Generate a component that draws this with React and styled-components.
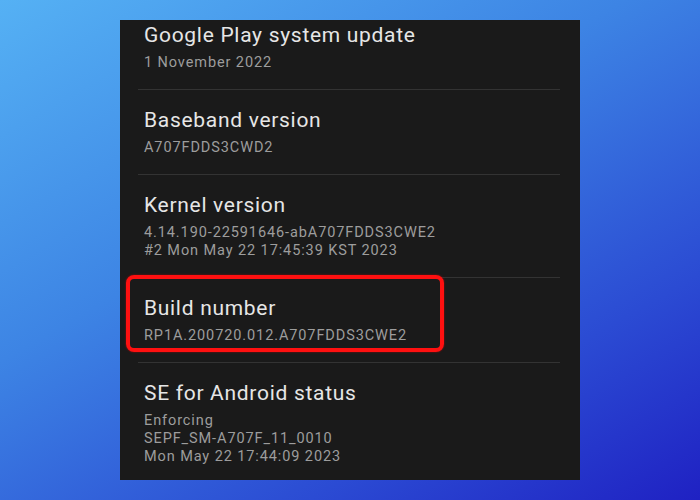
import React from 'react';
import styled, { createGlobalStyle } from 'styled-components';

const GlobalStyle = createGlobalStyle`
  html, body {
    margin: 0;
    padding: 0;
  }
  body {
    font-family: Roboto, 'Noto Sans', sans-serif;
  }
`;

const Backdrop = styled.div`
  width: 700px;
  height: 500px;
  display: flex;
  justify-content: center;
  align-items: center;
  background: linear-gradient(150deg, #55b1f4 0%, #3d84e4 40%, #2b4bd3 75%, #1f21c3 100%);
`;

const Screen = styled.div`
  width: 460px;
  height: 460px;
  background-color: #1a1a1a;
  overflow: hidden;
`;

const List = styled.div`
  margin-top: -15px;
  display: flex;
  flex-direction: column;
`;

const Item = styled.div`
  position: relative;
  margin: 0 20px 0 18px;
  padding: 17px 6px;
  border-bottom: ${(p) => (p.last ? 'none' : '1px solid #333333')};
`;

const Title = styled.div`
  font-size: 21px;
  line-height: 26px;
  letter-spacing: 0.7px;
  color: #e6e6e6;
  white-space: nowrap;
`;

const Sub = styled.div`
  margin-top: 6px;
  font-size: 14.5px;
  line-height: 18px;
  letter-spacing: 0.9px;
  color: #9d9d9d;
  white-space: nowrap;
`;

const Highlight = styled.div`
  position: absolute;
  left: -12px;
  top: -3px;
  width: 318px;
  height: 77px;
  box-sizing: border-box;
  border: 4px solid #ff1010;
  border-radius: 8px;
  box-shadow: 0 0 2px rgba(255, 0, 0, 0.6);
`;

const rows = [
  { title: 'Google Play system update', lines: ['1 November 2022'] },
  { title: 'Baseband version', lines: ['A707FDDS3CWD2'] },
  {
    title: 'Kernel version',
    lines: ['4.14.190-22591646-abA707FDDS3CWE2', '#2 Mon May 22 17:45:39 KST 2023'],
  },
  { title: 'Build number', lines: ['RP1A.200720.012.A707FDDS3CWE2'], marked: true },
  {
    title: 'SE for Android status',
    lines: ['Enforcing', 'SEPF_SM-A707F_11_0010', 'Mon May 22 17:44:09 2023'],
  },
];

const App = () => {
  return (
    <Backdrop>
      <GlobalStyle />
      <Screen>
        <List>
          {rows.map((row, i) => (
            <Item key={row.title} last={i === rows.length - 1}>
              <Title>{row.title}</Title>
              <Sub>
                {row.lines.map((line) => (
                  <div key={line}>{line}</div>
                ))}
              </Sub>
              {row.marked && <Highlight />}
            </Item>
          ))}
        </List>
      </Screen>
    </Backdrop>
  );
};

export default App;
